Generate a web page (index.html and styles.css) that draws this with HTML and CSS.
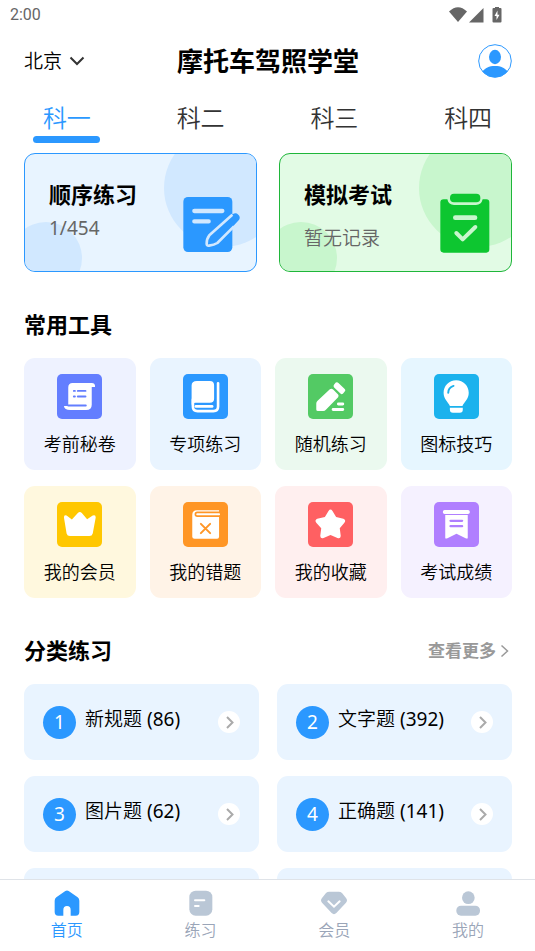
FILE: index.html
```html
<!DOCTYPE html>
<html lang="zh-CN">
<head>
<meta charset="utf-8">
<meta name="viewport" content="width=device-width, initial-scale=1">
<title>摩托车驾照学堂</title>
<link rel="stylesheet" href="styles.css">
</head>
<body>
<div class="app">
  <div class="status">
    <span>2:00</span>
    <svg class="status-icons" viewBox="0 0 54 18" aria-hidden="true">
      <path d="M0 5.500Q9-3 18 5.500L9 16Z"/>
      <path d="M34.500 2V16.500H20Z"/>
      <path fill-rule="evenodd" d="M44.500 2H46V1h4v1h1.500q1 0 1 1v12.500q0 1-1 1h-7q-1 0-1-1V3q0-1 1-1ZM48.500 4.500 45.500 10H47.500V14L50.500 8.700H48.500Z"/>
    </svg>
  </div>

  <header class="header">
    <button class="city" type="button">北京
      <svg class="city-arrow" viewBox="0 0 16 10" aria-hidden="true"><path d="M1.500 1.500 8 8l6.500-6.500"/></svg>
    </button>
    <h1 class="title">摩托车驾照学堂</h1>
    <button class="avatar" type="button" aria-label="个人中心">
      <svg viewBox="0 0 34 34" aria-hidden="true">
        <circle cx="17" cy="17" r="16.300" fill="none" stroke="currentColor"/>
        <ellipse cx="17" cy="13" rx="6" ry="7.200"/>
        <path d="M4.500 27.500C7 24 11 22 17 22s10 2 12.500 5.500A16.500 16.500 0 0 1 4.500 27.500Z"/>
      </svg>
    </button>
  </header>

  <nav class="tabs" aria-label="科目">
    <button class="tab tab-active" type="button">科一</button>
    <button class="tab" type="button">科二</button>
    <button class="tab" type="button">科三</button>
    <button class="tab" type="button">科四</button>
  </nav>

  <main class="main">
    <div class="modes">
      <a class="mode mode-practice" href="#practice">
        <span class="mode-text">
          <strong class="mode-name">顺序练习</strong>
          <span class="mode-info latin">1/454</span>
        </span>
        <svg class="mode-icon" viewBox="500 144 180 180" aria-hidden="true">
          <rect x="504" y="156" width="147" height="165" rx="14" fill="#2b98ff"/>
          <path d="M537 198h84M537 229h43" fill="none" stroke="#d1e8ff" stroke-width="13" stroke-linecap="round"/>
          <path d="M652 208q9-7 17 1t1 17L606 295q-9 6-26 8-7 0-6-8 1-17 8-28Z" fill="#2b98ff"/>
          <path d="M651 209 582 271q-8 10-8 25 0 7 7 6 16-2 25-8L656 244" fill="none" stroke="#d1e8ff" stroke-width="8" stroke-linejoin="round"/>
        </svg>
      </a>
      <a class="mode mode-exam" href="#exam">
        <span class="mode-text">
          <strong class="mode-name">模拟考试</strong>
          <span class="mode-info">暂无记录</span>
        </span>
        <svg class="mode-icon" viewBox="500 144 180 180" aria-hidden="true">
          <path d="M520 163H531Q535 180 551 180H617Q633 180 637 163H648Q657 163 657 172V313Q657 323 648 323H520Q510 323 510 313V172Q510 163 520 163Z" fill="#0dc630"/>
          <rect x="539" y="146" width="91" height="26" rx="12" fill="#0dc630"/>
          <path d="M555 218h59" fill="none" stroke="#c8f6cd" stroke-width="14" stroke-linecap="round"/>
          <path d="M558 264 577 283 615 246" fill="none" stroke="#c8f6cd" stroke-width="12" stroke-linecap="round" stroke-linejoin="round"/>
        </svg>
      </a>
    </div>

    <div class="section-head"><h2 class="section-title">常用工具</h2></div>
    <div class="tools">
      <a class="tool tool-indigo" href="#paper">
        <svg class="tool-icon" viewBox="126 223 136 136" aria-hidden="true">
          <path d="M173 250H231Q242 250 241 262H231V316Q231 332 214 332H166Q148 332 147 320H160V264Q160 250 173 250Z"/>
          <path class="cut" d="M177 274h3M189 274h23M177 291h3M189 291h23M160 318h53" stroke-width="6"/>
        </svg>
        <span>考前秘卷</span>
      </a>
      <a class="tool tool-blue" href="#special">
        <svg class="tool-icon" viewBox="502 223 136 136" aria-hidden="true">
          <path d="M544 244H583Q596 244 596 257V297Q596 310 583 310H540Q528 310 528 320V258Q528 244 544 244Z"/>
          <path class="line" d="M608 251V321Q608 335 594 335H546Q532 335 532 323V300" stroke-width="8"/>
          <path class="line" d="M541 321h49" stroke-width="8" stroke-linecap="butt"/>
        </svg>
        <span>专项练习</span>
      </a>
      <a class="tool tool-green" href="#random">
        <svg class="tool-icon" viewBox="130 88 136 136" aria-hidden="true">
          <path d="M196 134Q201 130 206 135L221 150Q224 154 221 158L184 196Q181 200 176 200H160Q155 200 155 195V177Q155 172 159 169Z"/>
          <path d="M214 114Q218 111 222 115L241 133Q245 137 241 141L236 147Q232 151 228 147L209 129Q205 125 209 120Z"/>
          <path class="line" d="M222 179h13M206 195h29" stroke-width="9"/>
        </svg>
        <span>随机练习</span>
      </a>
      <a class="tool tool-sky" href="#signs">
        <svg class="tool-icon" viewBox="507 88 136 136" aria-hidden="true">
          <path d="M574 107C596 107 612 124 612 145 612 164 598 173 593 185H555C550 173 536 164 536 145 536 124 552 107 574 107Z"/>
          <path d="M555 190H594V196Q594 205 585 205H564Q555 205 555 196Z"/>
          <path class="cut" d="M550 145Q550 129 566 124" stroke-width="6"/>
        </svg>
        <span>图标技巧</span>
      </a>
      <a class="tool tool-yellow" href="#vip">
        <svg class="tool-icon" viewBox="126 69 136 136" aria-hidden="true">
          <path d="M155 110 171 122 189 102Q195 97 201 102L217 121 234 110Q243 106 243 116L234 164Q232 172 224 172H165Q157 172 155 164L147 116Q147 106 155 110Z"/>
        </svg>
        <span>我的会员</span>
      </a>
      <a class="tool tool-orange" href="#mistakes">
        <svg class="tool-icon" viewBox="502 69 136 136" aria-hidden="true">
          <path d="M611 94V98H545Q537 98 537 106 537 114 545 114H611V174Q611 180 605 180H537Q530 180 530 174V108Q530 94 544 94Z"/>
          <path class="line" d="M545 106h66" stroke-width="6" stroke-linecap="butt"/>
          <path class="cut" d="M556 135 584 163M584 135 556 163" stroke-width="6"/>
        </svg>
        <span>我的错题</span>
      </a>
      <a class="tool tool-red" href="#favorites">
        <svg class="tool-icon" viewBox="131 69 136 136" aria-hidden="true">
          <path d="M193 96Q199 88 205 96L216 114 238 120Q247 124 241 132L227 148 230 172Q229 181 220 178L199 169 178 178Q169 181 168 172L171 148 156 132Q150 124 159 120L182 114Z"/>
        </svg>
        <span>我的收藏</span>
      </a>
      <a class="tool tool-purple" href="#scores">
        <svg class="tool-icon" viewBox="507 69 136 136" aria-hidden="true">
          <rect x="534" y="93" width="81" height="12" rx="5"/>
          <path d="M541 108H609V177Q609 181 604 179L575 165 546 179Q541 181 541 177Z"/>
          <path class="cut" d="M557 126h35M557 142h35" stroke-width="7"/>
        </svg>
        <span>考试成绩</span>
      </a>
    </div>

    <div class="section-head">
      <h2 class="section-title">分类练习</h2>
      <a class="more" href="#more">查看更多
        <svg class="more-arrow" viewBox="0 0 10 14" aria-hidden="true"><path d="M1.500 1.500 7.500 7l-6 5.500"/></svg>
      </a>
    </div>
    <div class="topics">
      <a class="topic" href="#t1"><span class="num latin">1</span><span class="topic-name">新规题 <span class="latin">(86)</span></span><span class="go"><svg viewBox="0 0 22 22" aria-hidden="true"><path d="M9 6l5.500 5.500L9 17"/></svg></span></a>
      <a class="topic" href="#t2"><span class="num latin">2</span><span class="topic-name">文字题 <span class="latin">(392)</span></span><span class="go"><svg viewBox="0 0 22 22" aria-hidden="true"><path d="M9 6l5.500 5.500L9 17"/></svg></span></a>
      <a class="topic" href="#t3"><span class="num latin">3</span><span class="topic-name">图片题 <span class="latin">(62)</span></span><span class="go"><svg viewBox="0 0 22 22" aria-hidden="true"><path d="M9 6l5.500 5.500L9 17"/></svg></span></a>
      <a class="topic" href="#t4"><span class="num latin">4</span><span class="topic-name">正确题 <span class="latin">(141)</span></span><span class="go"><svg viewBox="0 0 22 22" aria-hidden="true"><path d="M9 6l5.500 5.500L9 17"/></svg></span></a>
      <span class="topic"></span>
      <span class="topic"></span>
    </div>
  </main>

  <nav class="bottom" aria-label="主导航">
    <a class="item item-active" href="#home">
      <svg viewBox="161 151 78 78" aria-hidden="true"><path d="M195 154Q200 151 205 154L232 173Q237 177 237 183V217Q237 228 226 228H211V211Q211 199 200 199T189 211V228H174Q163 228 163 217V183Q163 177 168 173Z"/></svg>
      <span>首页</span>
    </a>
    <a class="item" href="#exercise">
      <svg viewBox="563 151 78 78" aria-hidden="true"><rect x="567" y="153" width="69" height="75" rx="19"/><path class="mark" d="M584 182h28M584 199h11"/></svg>
      <span>练习</span>
    </a>
    <a class="item" href="#member">
      <svg viewBox="162 151 78 78" aria-hidden="true"><path d="M187 156H215Q221 156 225 160L237 175Q243 182 237 189L208 220Q201 227 194 220L165 189Q159 182 165 175L177 160Q181 156 187 156Z"/><path class="mark" d="M184 185 201 201 218 185"/></svg>
      <span>会员</span>
    </a>
    <a class="item" href="#me">
      <svg viewBox="563 151 78 78" aria-hidden="true"><circle cx="603" cy="174" r="19"/><rect x="567" y="198" width="71" height="30" rx="14"/></svg>
      <span>我的</span>
    </a>
  </nav>
</div>
</body>
</html>
```
FILE: styles.css
```css
* { box-sizing: border-box; }

body {
  margin: 0;
  background: #fff;
  color: #000;
  font-family: "Noto Sans", "Noto Sans CJK SC", sans-serif;
  font-weight: 350;
}

a { color: inherit; text-decoration: none; }

button {
  padding: 0;
  border: 0;
  background: none;
  color: inherit;
  font: inherit;
}

h1, h2 { margin: 0; }
svg { display: block; }

/* digits use the regular weight beside the lighter Chinese text */
.latin { font-weight: 400; }

.app {
  display: flex;
  flex-direction: column;
  height: 100vh;
}

.status {
  display: flex;
  justify-content: space-between;
  align-items: center;
  flex: none;
  height: 30px;
  padding: 0 32px 0 10px;
  color: #666;
  font: 400 16px/30px Roboto, sans-serif;
}
.status-icons { width: 54px; height: 18px; fill: #666; }

.header {
  display: grid;
  grid-template-columns: 1fr auto 1fr;
  align-items: center;
  flex: none;
  height: 61px;
  padding: 0 23px 0 24px;
}
.city {
  display: flex;
  align-items: center;
  justify-self: start;
  gap: 7px;
  font-size: 19px;
  line-height: 28px;
}
.city-arrow {
  width: 16px;
  height: 10px;
  fill: none;
  stroke: #333;
  stroke-width: 2;
}
.title { font-size: 26px; line-height: 36px; }
.avatar {
  justify-self: end;
  width: 34px;
  height: 34px;
  color: #2b98ff;
}
.avatar svg { fill: currentColor; }

.tabs {
  display: grid;
  grid-template-columns: repeat(4, 1fr);
  flex: none;
  height: 52px;
}
.tab {
  display: flex;
  flex-direction: column;
  align-items: center;
  padding-top: 9px;
  color: #333;
  font-size: 24px;
  line-height: 36px;
}
.tab-active { color: #2b98ff; }
.tab-active::after {
  content: "";
  width: 50%;
  height: 7px;
  border-radius: 4px;
  background: #2b98ff;
}

.main {
  flex: 1;
  min-height: 0;
  overflow: hidden;
  padding: 10px 23px 0 24px;
}

.modes {
  display: grid;
  grid-template-columns: 1fr 1fr;
  gap: 22px;
}
.mode {
  position: relative;
  display: flex;
  justify-content: space-between;
  align-items: flex-end;
  height: 119px;
  padding: 0 14px 18px 24px;
  overflow: hidden;
  border: 1px solid;
  border-radius: 11px;
}
.mode::before,
.mode::after {
  content: "";
  position: absolute;
  border-radius: 50%;
}
.mode::before { top: -25px; right: -26px; width: 118px; height: 118px; }
.mode::after { bottom: -23px; left: -15px; width: 72px; height: 72px; }
.mode-practice { border-color: #2b98ff; background: #e8f4ff; }
.mode-practice::before, .mode-practice::after { background: #d1e8ff; }
.mode-exam { border-color: #1fb63a; background: #e2fbe5; }
.mode-exam::before, .mode-exam::after { background: #c8f6cd; }
.mode-text {
  z-index: 1;
  display: flex;
  flex-direction: column;
  align-self: flex-start;
  padding-top: 24px;
}
.mode-name { font-size: 22px; line-height: 32px; }
.mode-info { color: #666; font-size: 19px; line-height: 36px; }
.mode-exam .mode-info { line-height: 56px; }
.mode-icon { z-index: 1; width: 60px; height: 60px; }

.section-head {
  display: flex;
  justify-content: space-between;
  align-items: center;
  margin: 36px 0 18px;
}
.section-title { font-size: 22px; line-height: 32px; }
.more {
  display: flex;
  align-items: center;
  gap: 4px;
  padding: 2px 2px 0 0;
  color: #999;
  font-size: 17px;
  font-weight: 700;
  line-height: 24px;
}
.more-arrow {
  width: 10px;
  height: 14px;
  fill: none;
  stroke: #999;
  stroke-width: 1.5;
}

.tools {
  display: grid;
  grid-template-columns: repeat(4, 1fr);
  gap: 16px 14px;
}
.tool {
  display: flex;
  flex-direction: column;
  align-items: center;
  gap: 12px;
  height: 112px;
  padding-top: 16px;
  border-radius: 11px;
  font-size: 18px;
  line-height: 26px;
}
.tool-icon {
  width: 45px;
  height: 45px;
  border-radius: 5px;
  background: var(--c);
  fill: #fff;
}
.cut, .line { fill: none; stroke-linecap: round; stroke-linejoin: round; }
.cut { stroke: var(--c); }
.line { stroke: #fff; }
.tool-indigo { --c: #637eff; background: #eef2ff; }
.tool-blue { --c: #2b98ff; background: #e9f4ff; }
.tool-green { --c: #53ca64; background: #ebf9ef; }
.tool-sky { --c: #1bb2ed; background: #e6f6ff; }
.tool-yellow { --c: #ffc700; background: #fff8de; }
.tool-orange { --c: #ff9626; background: #fff3e7; }
.tool-red { --c: #ff6062; background: #ffefef; }
.tool-purple { --c: #b07fff; background: #f5f1ff; }

.topics {
  display: grid;
  grid-template-columns: 1fr 1fr;
  gap: 16px 18px;
}
.topic {
  display: flex;
  align-items: center;
  height: 76px;
  padding: 0 19px;
  border-radius: 11px;
  background: #e9f4ff;
}
.num {
  width: 33px;
  height: 33px;
  border-radius: 50%;
  background: #2b98ff;
  color: #fff;
  font-size: 19px;
  line-height: 33px;
  text-align: center;
}
.topic-name {
  flex: 1;
  padding: 0 0 6px 9px;
  font-size: 19px;
  line-height: 26px;
}
.go {
  width: 22px;
  height: 22px;
  border-radius: 50%;
  background: #fff;
}
.go svg { fill: none; stroke: #aaa; stroke-width: 2; }

.bottom {
  display: grid;
  grid-template-columns: repeat(4, 1fr);
  flex: none;
  height: 72px;
  border-top: 1px solid #dfe3e8;
  background: #fff;
}
.item {
  display: flex;
  flex-direction: column;
  align-items: center;
  gap: 2px;
  padding-top: 10px;
  color: #9aa5b8;
  font-size: 16px;
  line-height: 24px;
}
.item svg { width: 26px; height: 26px; fill: #bac7d6; }
.item .mark {
  fill: none;
  stroke: #fff;
  stroke-width: 6;
  stroke-linecap: round;
}
.item-active { color: #2b98ff; }
.item-active svg { fill: #2b98ff; }
```
